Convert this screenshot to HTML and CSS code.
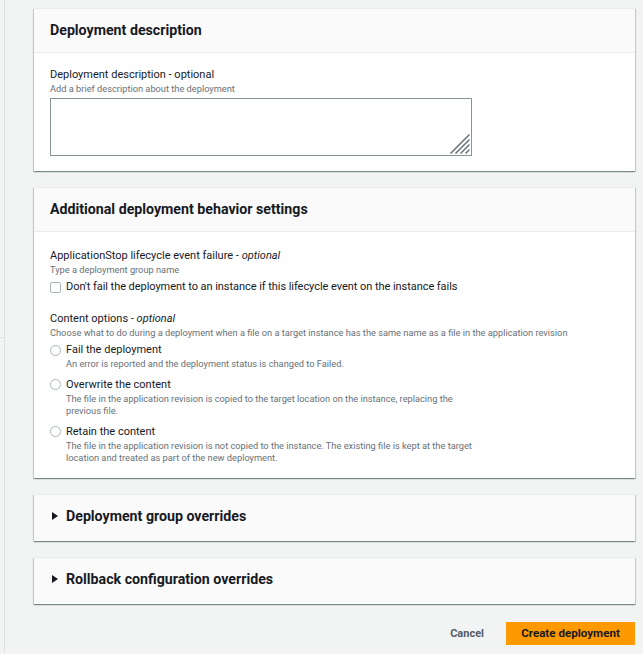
FILE: index.html
```html
<!DOCTYPE html>
<html lang="en">
<head>
<meta charset="utf-8">
<title>Create deployment</title>
<link rel="stylesheet" href="styles.css">
</head>
<body>
<div class="layout">
  <aside class="rail"><div class="rail-top"></div></aside>
  <main class="main">
    <section class="card">
      <header class="card-head"><h2>Deployment description</h2></header>
      <div class="card-body body-first">
        <div class="field">
          <div class="label">Deployment description - optional</div>
          <div class="hint">Add a brief description about the deployment</div>
          <div class="textarea">
            <svg class="grip" width="20" height="20" viewBox="0 0 20 20"><path d="M0.5 19.5 L19.5 0.5 M5.5 19.5 L19.5 5.5 M10.5 19.5 L19.5 10.5 M15.5 19.5 L19.5 15.5" stroke="#687078" stroke-width="1.5" fill="none"/></svg>
          </div>
        </div>
      </div>
    </section>

    <section class="card">
      <header class="card-head"><h2>Additional deployment behavior settings</h2></header>
      <div class="card-body body-second">
        <div class="field">
          <div class="label">ApplicationStop lifecycle event failure - <i>optional</i></div>
          <div class="hint">Type a deployment group name</div>
          <label class="check-row"><span class="checkbox"></span><span>Don't fail the deployment to an instance if this lifecycle event on the instance fails</span></label>
        </div>
        <div class="field field-gap">
          <div class="label">Content options - <i>optional</i></div>
          <div class="hint">Choose what to do during a deployment when a file on a target instance has the same name as a file in the application revision</div>
          <div class="radios">
            <div class="radio-row">
              <span class="radio"></span>
              <div>
                <div class="radio-label">Fail the deployment</div>
                <div class="radio-desc">An error is reported and the deployment status is changed to Failed.</div>
              </div>
            </div>
            <div class="radio-row">
              <span class="radio"></span>
              <div>
                <div class="radio-label">Overwrite the content</div>
                <div class="radio-desc">The file in the application revision is copied to the target location on the instance, replacing the previous file.</div>
              </div>
            </div>
            <div class="radio-row">
              <span class="radio"></span>
              <div>
                <div class="radio-label">Retain the content</div>
                <div class="radio-desc">The file in the application revision is not copied to the instance. The existing file is kept at the target location and treated as part of the new deployment.</div>
              </div>
            </div>
          </div>
        </div>
      </div>
    </section>

    <section class="card collapsed">
      <header class="card-head plain"><span class="caret"></span><h2>Deployment group overrides</h2></header>
    </section>

    <section class="card collapsed">
      <header class="card-head plain"><span class="caret"></span><h2>Rollback configuration overrides</h2></header>
    </section>

    <div class="actions">
      <button class="btn-link" type="button">Cancel</button>
      <button class="btn-primary" type="button">Create deployment</button>
    </div>
  </main>
</div>
</body>
</html>
```

FILE: styles.css
```css
* { box-sizing: border-box; }
html, body { margin: 0; padding: 0; }
body {
  background: #f2f3f3;
  font-family: "Roboto", "Liberation Sans", sans-serif;
  color: #16191f;
  width: 643px;
  height: 654px;
  overflow: hidden;
}
.layout { display: flex; min-height: 654px; }
.rail {
  width: 5px;
  flex: none;
  border-right: 1px solid #dfe2e2;
}
.rail-top { height: 338px; border-bottom: 1px solid #dfe2e2; }
.main {
  flex: 1;
  padding: 8px 8px 0 29px;
  display: flex;
  flex-direction: column;
  gap: 16px;
}
.card {
  background: #fff;
  border-top: 1px solid #eaeded;
  box-shadow: 0 1px 1px 0 rgba(0,28,36,0.3), 1px 1px 1px 0 rgba(0,28,36,0.15), -1px 1px 1px 0 rgba(0,28,36,0.15);
}
.card-head {
  background: #fafafa;
  border-bottom: 1px solid #eaeded;
  height: 44px;
  display: flex;
  align-items: center;
  padding: 0 16px 2px;
}
.card-head.plain { border-bottom: none; height: 46px; padding-bottom: 3px; }
.card-head h2 {
  margin: 0;
  font-size: 14.2px;
  font-weight: 700;
}
.caret {
  width: 0; height: 0;
  border-top: 4px solid transparent;
  border-bottom: 4px solid transparent;
  border-left: 6px solid #16191f;
  margin: 0 8px 0 2px;
}
.card-body { padding: 15px 16px 14px; }
.body-first { padding-top: 15px; padding-bottom: 15px; }
.body-second { padding-top: 17px; padding-bottom: 13px; }
.label { font-size: 11px; line-height: 14px; }
.hint { font-size: 9.25px; line-height: 13px; color: #687078; }
.body-first .textarea { margin-top: 3px; }
.textarea {
  width: 422px;
  height: 58px;
  border: 1px solid #879596;
  position: relative;
}
.grip { position: absolute; right: 1px; bottom: 1px; }
.check-row {
  display: flex; align-items: center; gap: 5px;
  margin-top: 4px;
  font-size: 11px; line-height: 14px; letter-spacing: -0.05px;
}
.checkbox {
  width: 11px; height: 11px;
  border: 1px solid #aab7b8;
  border-radius: 2px;
  flex: none;
}
.field-gap { margin-top: 18px; }
.radios { display: flex; flex-direction: column; gap: 7px; margin-top: 4px; }
.radio-row { display: flex; gap: 5px; align-items: flex-start; }
.radio {
  width: 11px; height: 11px;
  border: 1px solid #aab7b8;
  border-radius: 50%;
  flex: none;
  margin-top: 1.5px;
}
.radio-label { font-size: 11px; line-height: 14px; }
.radio-desc {
  font-size: 9.25px; line-height: 12.5px; color: #687078;
  max-width: 412px;
  margin-top: 1px;
}
.actions {
  display: flex;
  justify-content: flex-end;
  align-items: center;
  gap: 22px;
  margin-top: 2px;
}
.btn-link {
  background: none; border: none;
  font-family: inherit; font-size: 11px; font-weight: 700;
  color: #545b64; padding: 0;
}
.btn-primary {
  background: #ff9900;
  border: none;
  font-family: inherit; font-size: 11.6px; font-weight: 700;
  color: #16191f;
  width: 129px; height: 23px;
  padding: 0;
}
```
